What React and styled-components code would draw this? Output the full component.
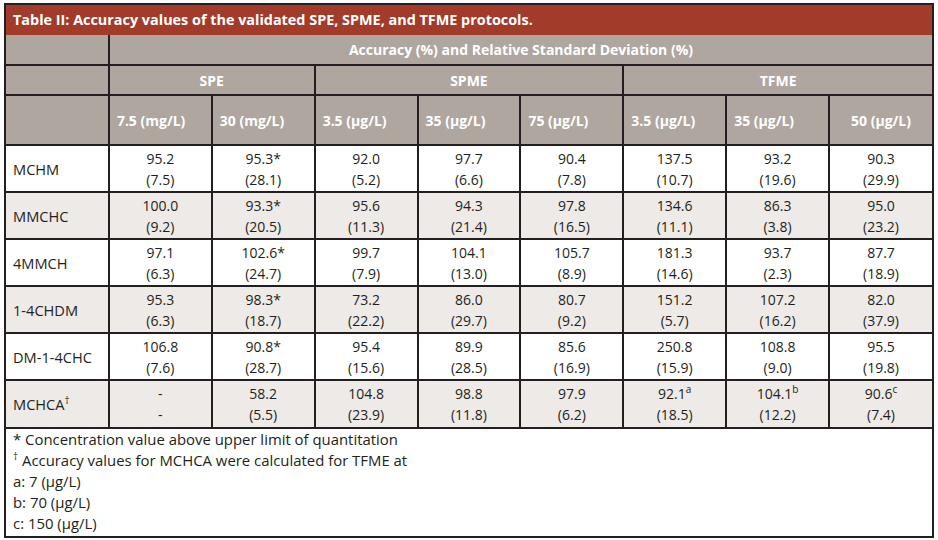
import styled, { createGlobalStyle } from 'styled-components'

const GlobalStyle = createGlobalStyle`
  html, body {
    margin: 0;
    padding: 0;
    background: #ffffff;
  }
  body {
    font-family: 'Open Sans', 'Noto Sans', sans-serif;
    color: #231f20;
  }
`

const rows = [
  { name: 'MCHM', cells: [['95.2', '(7.5)'], ['95.3*', '(28.1)'], ['92.0', '(5.2)'], ['97.7', '(6.6)'], ['90.4', '(7.8)'], ['137.5', '(10.7)'], ['93.2', '(19.6)'], ['90.3', '(29.9)']] },
  { name: 'MMCHC', cells: [['100.0', '(9.2)'], ['93.3*', '(20.5)'], ['95.6', '(11.3)'], ['94.3', '(21.4)'], ['97.8', '(16.5)'], ['134.6', '(11.1)'], ['86.3', '(3.8)'], ['95.0', '(23.2)']] },
  { name: '4MMCH', cells: [['97.1', '(6.3)'], ['102.6*', '(24.7)'], ['99.7', '(7.9)'], ['104.1', '(13.0)'], ['105.7', '(8.9)'], ['181.3', '(14.6)'], ['93.7', '(2.3)'], ['87.7', '(18.9)']] },
  { name: '1-4CHDM', cells: [['95.3', '(6.3)'], ['98.3*', '(18.7)'], ['73.2', '(22.2)'], ['86.0', '(29.7)'], ['80.7', '(9.2)'], ['151.2', '(5.7)'], ['107.2', '(16.2)'], ['82.0', '(37.9)']] },
  { name: 'DM-1-4CHC', cells: [['106.8', '(7.6)'], ['90.8*', '(28.7)'], ['95.4', '(15.6)'], ['89.9', '(28.5)'], ['85.6', '(16.9)'], ['250.8', '(15.9)'], ['108.8', '(9.0)'], ['95.5', '(19.8)']] },
  { name: 'MCHCA', mark: '†', cells: [['-', '-'], ['58.2', '(5.5)'], ['104.8', '(23.9)'], ['98.8', '(11.8)'], ['97.9', '(6.2)'], ['92.1', '(18.5)', 'a'], ['104.1', '(12.2)', 'b'], ['90.6', '(7.4)', 'c']] },
]

const units = [
  { label: '7.5 (mg/L)' },
  { label: '30 (mg/L)' },
  { label: '3.5 (µg/L)' },
  { label: '35 (µg/L)' },
  { label: '75 (µg/L)' },
  { label: '3.5 (µg/L)' },
  { label: '35 (µg/L)' },
  { label: '50 (µg/L)', centered: true },
]

export default function App() {
  return (
    <>
      <GlobalStyle />
      <Page>
        <Frame>
          <TitleBar>
            Table II: Accuracy values of the validated SPE, SPME, and TFME protocols.
          </TitleBar>
          <Table>
            <colgroup>
              {Array.from({ length: 9 }).map((_, i) => (
                <col key={i} />
              ))}
            </colgroup>
            <thead>
              <HeadRow height={30}>
                <HeadCell />
                <HeadCell colSpan={8} center>
                  Accuracy (%) and Relative Standard Deviation (%)
                </HeadCell>
              </HeadRow>
              <HeadRow height={30}>
                <HeadCell />
                <HeadCell colSpan={2} center>SPE</HeadCell>
                <HeadCell colSpan={3} center>SPME</HeadCell>
                <HeadCell colSpan={3} center>TFME</HeadCell>
              </HeadRow>
              <HeadRow height={50}>
                <HeadCell />
                {units.map((u, i) => (
                  <HeadCell key={i} center={u.centered}>
                    {u.label}
                  </HeadCell>
                ))}
              </HeadRow>
            </thead>
            <tbody>
              {rows.map((row, r) => (
                <BodyRow key={row.name} striped={r % 2 === 1}>
                  <LabelCell>
                    {row.name}
                    {row.mark && <Sup>{row.mark}</Sup>}
                  </LabelCell>
                  {row.cells.map(([value, rsd, note], i) => (
                    <ValueCell key={i}>
                      <Line>
                        {value}
                        {note && <Sup>{note}</Sup>}
                      </Line>
                      <Line>{rsd}</Line>
                    </ValueCell>
                  ))}
                </BodyRow>
              ))}
            </tbody>
          </Table>
          <Notes>
            <Note>* Concentration value above upper limit of quantitation</Note>
            <Note>
              <Sup>†</Sup> Accuracy values for MCHCA were calculated for TFME at
            </Note>
            <Note>a: 7 (µg/L)</Note>
            <Note>b: 70 (µg/L)</Note>
            <Note>c: 150 (µg/L)</Note>
          </Notes>
        </Frame>
      </Page>
    </>
  )
}

const Page = styled.div`
  padding: 3px 0 0 4px;
`

const Frame = styled.div`
  width: 930px;
  box-sizing: border-box;
  border: 2px solid #231f20;
`

const TitleBar = styled.div`
  height: 30px;
  background: #a33b2a;
  color: #ffffff;
  font-weight: 700;
  font-size: 14.4px;
  line-height: 30px;
  padding-left: 7px;
  white-space: nowrap;
`

const Table = styled.table`
  width: 100%;
  table-layout: fixed;
  border-collapse: collapse;
  border-style: hidden;
  font-size: 14px;
`

const HeadRow = styled.tr`
  height: ${({ height }) => height}px;
  background: #aea69f;
`

const HeadCell = styled.th`
  border: 2px solid #231f20;
  color: #ffffff;
  font-weight: 700;
  font-size: 14px;
  text-align: ${({ center }) => (center ? 'center' : 'left')};
  padding: 0 7px;
  white-space: nowrap;
`

const BodyRow = styled.tr`
  height: 47px;
  background: ${({ striped }) => (striped ? '#eeeae7' : '#ffffff')};
`

const LabelCell = styled.td`
  border: 2px solid #231f20;
  padding: 0 7px;
  font-size: 14.6px;
  text-align: left;
  white-space: nowrap;
`

const ValueCell = styled.td`
  border: 2px solid #231f20;
  padding: 0;
  text-align: center;
`

const Line = styled.div`
  line-height: 21px;
`

const Sup = styled.sup`
  font-size: 10px;
  line-height: 0;
  vertical-align: 6px;
`

const Notes = styled.div`
  border-top: 2px solid #231f20;
  padding: 0 7px 2px;
  font-size: 14.9px;
`

const Note = styled.div`
  line-height: 21px;
`
